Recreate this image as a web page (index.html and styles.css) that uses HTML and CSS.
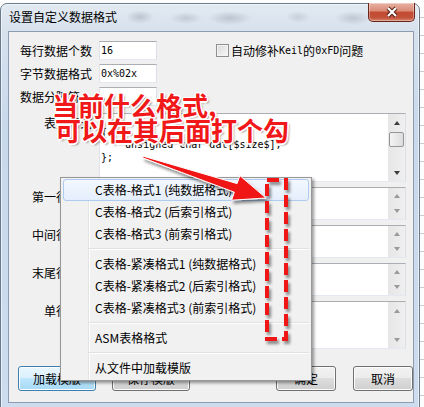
FILE: index.html
```html
<!DOCTYPE html>
<html lang="zh-CN">
<head>
  <meta charset="UTF-8">
  <title>设置自定义数据格式</title>
  <meta name="viewport" content="width=device-width, initial-scale=1.0">
  <link rel="stylesheet" href="styles.css">
</head>
<body>
  <div class="window">
    <div class="titlebar">
      <span class="title">设置自定义数据格式</span>
      <div class="close">
        <svg width="14" height="12" viewBox="0 0 14 12">
          <path class="x-back" d="M3 2 L11 10 M11 2 L3 10"/>
          <path class="x-front" d="M3 2 L11 10 M11 2 L3 10"/>
        </svg>
      </div>
    </div>

    <div class="client">
      <div class="top">
        <div class="fields">
          <div class="row"><label>每行数据个数</label><input class="edit" value="16"></div>
          <div class="row"><label>字节数据格式</label><input class="edit" value="0x%02x"></div>
          <div class="row"><label>数据分隔符</label><input class="edit" value=","></div>
        </div>
        <label class="check"><span class="box"></span>自动修补<span class="mono">Keil</span>的<span class="mono">0xFD</span>问题</label>
      </div>

      <div class="templates">
        <div class="tpl">
          <label>表头格式</label>
          <div class="memo big">
            <div class="text">
{
    unsigned char dat[$size$];
};</div>
            <div class="sb on"><span class="up"></span><span class="thumb"></span><span class="gap"></span><span class="down"></span></div>
          </div>
        </div>
        <div class="tpl">
          <label>第一行格式</label>
          <div class="memo">
            <div class="text"></div>
            <div class="sb"><span class="up"></span><span class="gap"></span><span class="down"></span></div>
          </div>
        </div>
        <div class="tpl">
          <label>中间行格式</label>
          <div class="memo">
            <div class="text"></div>
            <div class="sb"><span class="up"></span><span class="gap"></span><span class="down"></span></div>
          </div>
        </div>
        <div class="tpl">
          <label>末尾行格式</label>
          <div class="memo">
            <div class="text"></div>
            <div class="sb"><span class="up"></span><span class="gap"></span><span class="down"></span></div>
          </div>
        </div>
        <div class="tpl">
          <label>单行格式</label>
          <div class="memo mid">
            <div class="text"></div>
            <div class="sb"><span class="up"></span><span class="gap"></span><span class="down"></span></div>
          </div>
        </div>
      </div>

      <div class="buttons">
        <button class="btn wide focus">加载模版</button>
        <button class="btn wide">保存模版</button>
        <button class="btn push">确定</button>
        <button class="btn">取消</button>
      </div>
    </div>
  </div>

  <div class="menu">
    <div class="item hot">C表格-格式1 (纯数据格式)</div>
    <div class="item">C表格-格式2 (后索引格式)</div>
    <div class="item">C表格-格式3 (前索引格式)</div>
    <div class="sep"></div>
    <div class="item">C表格-紧凑格式1 (纯数据格式)</div>
    <div class="item">C表格-紧凑格式2 (后索引格式)</div>
    <div class="item">C表格-紧凑格式3 (前索引格式)</div>
    <div class="sep"></div>
    <div class="item">ASM表格格式</div>
    <div class="sep"></div>
    <div class="item">从文件中加载模版</div>
  </div>

  <div class="note">
    <div class="line">当前什么格式,</div>
    <div class="line l2">可以在其后面打个勾</div>
  </div>

  <svg class="marks" width="424" height="407" viewBox="0 0 424 407">
    <defs>
      <filter id="shade" x="-20%" y="-20%" width="150%" height="150%">
        <feDropShadow dx="2" dy="3" stdDeviation="1.5" flood-color="#000" flood-opacity="0.45"/>
      </filter>
    </defs>
    <g class="shaded">
      <polygon class="arrow" points="142.7,157.8 234.3,192.2 231.6,200.2 266,198 239.8,175.6 237.1,183.6 143.3,156.2"/>
      <rect class="dash" x="267" y="180" width="19" height="159"/>
    </g>
  </svg>
</body>
</html>
```

FILE: styles.css
```css
body { margin: 0; width: 424px; height: 407px; overflow: hidden; position: relative; font-family: "Noto Sans CJK SC", "Noto Sans", sans-serif; font-size: 12px; color: #000; background: repeating-linear-gradient(to bottom, #fdfdfd 0 17px, #c8ccd1 17px 18px); }

/* window frame */
.window { width: 420px; height: 420px; margin-top: 3px; box-sizing: border-box; border: 1px solid #6b7b8e; border-radius: 7px 7px 0 0; padding: 0 5px 0 7px; background: linear-gradient(to bottom, #e2e9f1 0, #d6e1ed 30px, #c9d9ec 120px, #cddcee 100%); box-shadow: inset 0 0 0 1px rgba(255,255,255,0.55); }
.titlebar { height: 27px; display: flex; justify-content: space-between; align-items: flex-start; background:
  radial-gradient(ellipse 14px 7px at 132px 13px, rgba(70,80,95,0.22), transparent),
  radial-gradient(ellipse 16px 6px at 178px 14px, rgba(70,80,95,0.18), transparent),
  radial-gradient(ellipse 22px 7px at 222px 14px, rgba(70,80,95,0.22), transparent),
  radial-gradient(ellipse 12px 6px at 290px 13px, rgba(70,80,95,0.15), transparent),
  radial-gradient(ellipse 18px 7px at 345px 14px, rgba(70,80,95,0.2), transparent); }
.title { margin: 5px 0 0 1px; line-height: 16px; }
.close { width: 47px; height: 19px; margin: -1px -1px 0 0; box-sizing: border-box; border: 1px solid #6a2417; border-top: none; border-radius: 0 0 5px 5px; display: flex; align-items: center; justify-content: center; background: linear-gradient(to bottom, #e8b1a4 0, #d98a76 45%, #c44b32 50%, #c2503a 80%, #d7876b 100%); box-shadow: inset 0 0 0 1px rgba(255,255,255,0.35); }
.x-back { stroke: #4a1a12; stroke-width: 4; fill: none; }
.x-front { stroke: #fff; stroke-width: 2.2; fill: none; }

.client { width: 406px; height: 372px; box-sizing: border-box; border: 1px solid #8d9db1; background: #f0f0f0; padding-top: 9px; }

/* top rows */
.top { display: flex; padding-left: 11px; }
.fields { width: 137px; display: flex; flex-direction: column; gap: 4px; }
.row { display: flex; align-items: center; height: 19px; }
.row label { width: 79px; line-height: 19px; }
.edit { width: 58px; height: 19px; box-sizing: border-box; margin: 0; padding: 0 1px; border: 1px solid; border-color: #abadb3 #dbdfe6 #e3e9ef #e2e3ea; background: #fff; font: 10px/17px "DejaVu Sans Mono", monospace; color: #000; }
.mono { font: 10px "DejaVu Sans Mono", monospace; }
.check { margin: 3px 0 0 59px; height: 13px; display: flex; align-items: center; line-height: 13px; }
.box { width: 13px; height: 13px; box-sizing: border-box; margin-right: 2px; border: 1px solid #8e8f8f; background: linear-gradient(135deg, #d9d9d9, #f8f8f8); box-shadow: inset 0 0 0 1px #f4f4f4; }

/* template memos */
.templates { display: flex; flex-direction: column; gap: 5px; margin-top: 7px; padding-left: 11px; }
.tpl { display: flex; }
.tpl label { width: 79px; box-sizing: border-box; padding: 3px 7px 0 0; text-align: right; line-height: 14px; }
.memo { width: 307px; height: 33px; box-sizing: border-box; display: flex; border: 1px solid; border-color: #abadb3 #dbdfe6 #e3e9ef #e2e3ea; background: #fff; }
.memo.big { height: 69px; }
.memo.mid { height: 48px; }
.text { flex: 1; padding: 0 1px; white-space: pre; font: 10px/12.7px "DejaVu Sans Mono", monospace; }
.sb { width: 17px; display: flex; flex-direction: column; background: linear-gradient(to right, #e6e6e6, #efefef); }
.sb .up, .sb .down { flex: 0 1 17px; min-height: 0; display: flex; align-items: center; justify-content: center; }
.sb .gap { flex: 1; }
.sb .up::before { content: ""; border-left: 3.5px solid transparent; border-right: 3.5px solid transparent; border-bottom: 4px solid #9a9a9a; }
.sb .down::before { content: ""; border-left: 3.5px solid transparent; border-right: 3.5px solid transparent; border-top: 4px solid #9a9a9a; }
.sb.on .up::before { border-bottom-color: #3c3c3c; }
.sb.on .down::before { border-top-color: #3c3c3c; }
.sb .thumb { height: 15px; margin: 1px 1px 0; box-sizing: border-box; border: 1px solid #959595; border-radius: 2px; background: linear-gradient(to right, #f4f4f4, #dcdcdc); }

/* buttons */
.buttons { display: flex; margin-top: 17px; padding-left: 9px; }
.btn { width: 60px; height: 25px; margin: 0 0 0 17px; padding: 0; border: 1px solid #707070; border-radius: 3px; font: 12px "Noto Sans CJK SC", sans-serif; color: #000; background: linear-gradient(to bottom, #f2f2f2 0, #ebebeb 50%, #dddddd 50%, #cfcfcf 100%); box-shadow: inset 0 0 0 1px #fcfcfc; }
.btn.wide { width: 78px; }
.btn:first-child { margin-left: 0; }
.btn.wide + .btn.wide { margin-left: 16px; }
.btn.push { margin-left: auto; }
.btn.focus { border-color: #3c7fb1; background: linear-gradient(to bottom, #eaf6fd 0, #d9f0fc 50%, #bee6fd 50%, #a7d9f5 100%); }

/* popup menu */
.menu { position: absolute; left: 60px; top: 177px; width: 252px; height: 204px; box-sizing: border-box; padding: 1px 2px 1px; border: 1px solid #979797; background: #f1f1f1; box-shadow: 2px 2px 3px rgba(0,0,0,0.4); }
.menu::before { content: ""; position: absolute; left: 27px; top: 0; bottom: 0; width: 1px; background: #e2e3e3; border-right: 1px solid #fff; }
.item { position: relative; height: 22px; box-sizing: border-box; padding-left: 31px; border: 1px solid transparent; border-radius: 3px; line-height: 20px; white-space: nowrap; }
.item.hot { border-color: #aeccf0; background: linear-gradient(to bottom, #f3f8fe, #e4eefb); }
.sep { position: relative; height: 8px; margin-left: 26px; }
.sep::after { content: ""; position: absolute; left: 0; right: 0; top: 3px; border-top: 1px solid #e0e0e0; border-bottom: 1px solid #fff; }

/* annotation */
.note { position: absolute; left: 52px; top: 94px; font: 700 26px/22px "Noto Sans CJK SC", sans-serif; color: #f01818; white-space: nowrap; text-shadow: -1.5px 0 0 #fff, 1.5px 0 0 #fff, 0 -1.5px 0 #fff, 0 1.5px 0 #fff, -1px -1px 0 #fff, 1px -1px 0 #fff, -1px 1px 0 #fff, 1px 1px 0 #fff, 2px 2px 2px rgba(0,0,0,0.4); }
.note .line { height: 22px; }
.note .l2 { margin-top: 3px; padding-left: 3px; }
.marks { position: absolute; left: 0; top: 0; pointer-events: none; }
.shaded { filter: url(#shade); }
.arrow { fill: #f01818; stroke: #fff; stroke-width: 1; }
.dash { fill: none; stroke: #f01818; stroke-width: 4; stroke-dasharray: 12 5; }
```
